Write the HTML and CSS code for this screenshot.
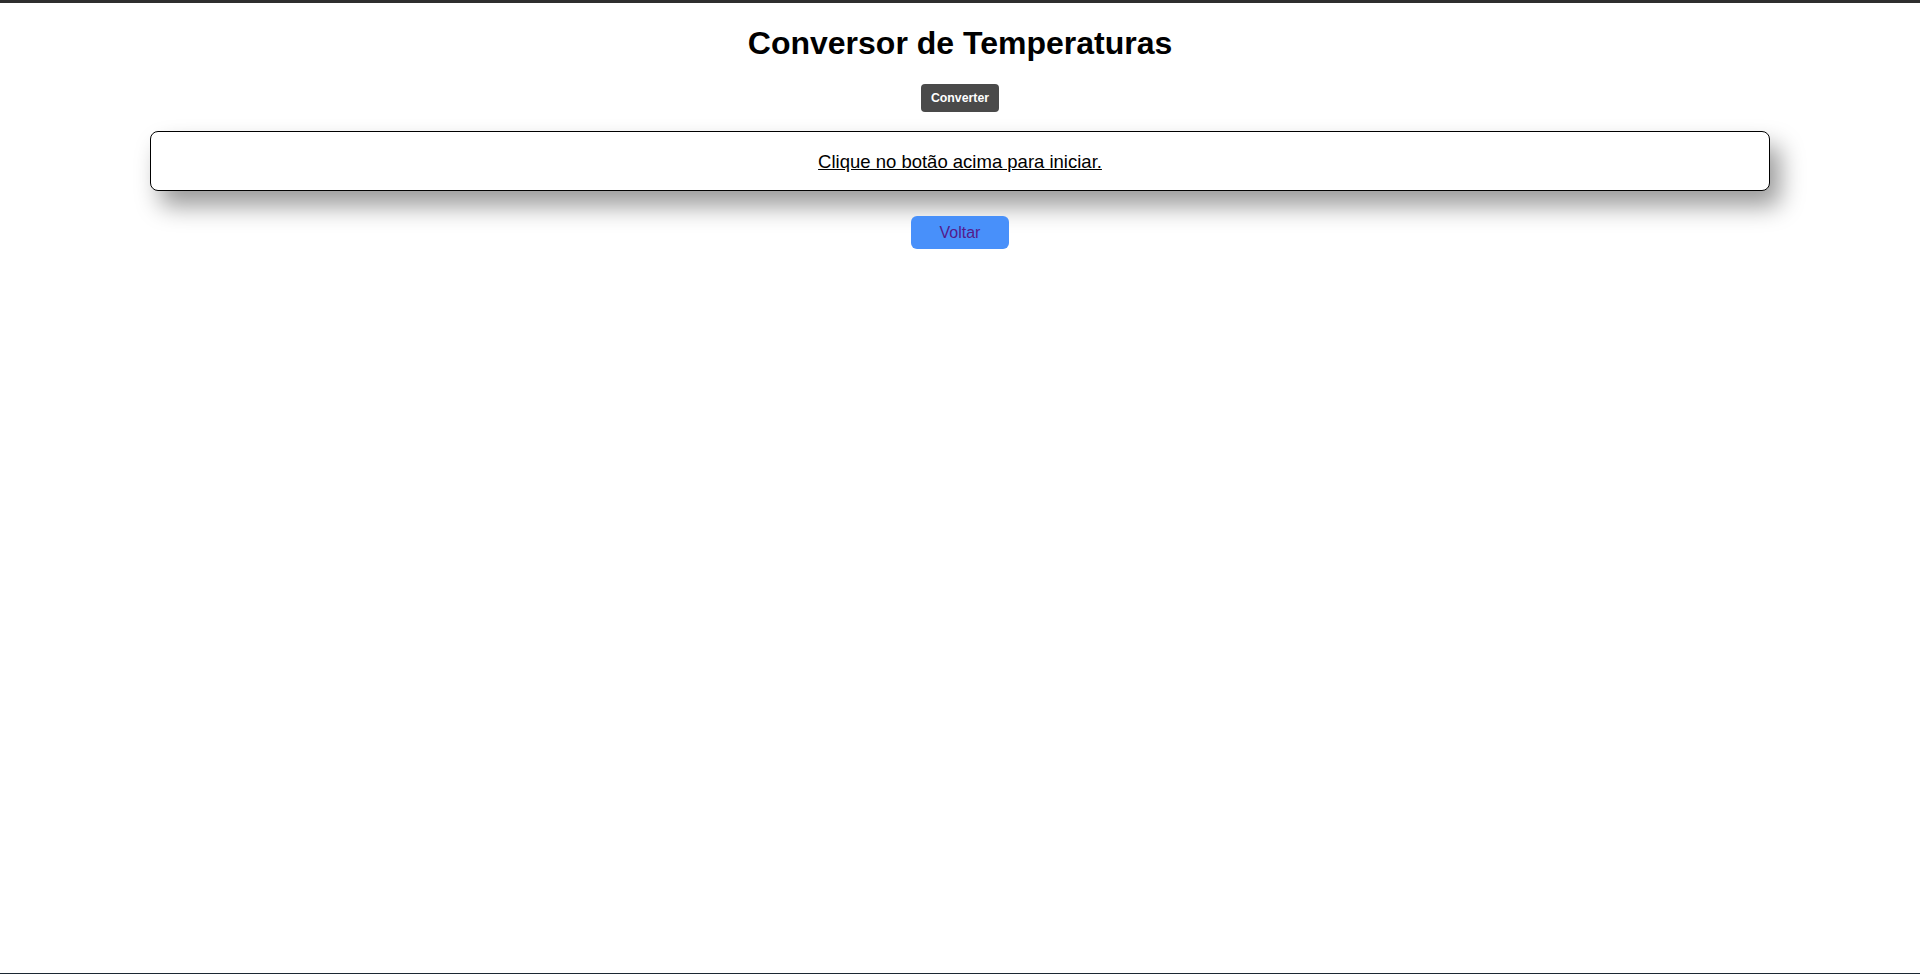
FILE: index.html
```html
<!DOCTYPE html>
<html lang="pt-BR">
<head>
<meta charset="utf-8">
<title>Conversor de Temperaturas</title>
<link rel="stylesheet" href="styles.css">
</head>
<body>
<div class="topbar"></div>
<main class="page">
  <h1 class="title">Conversor de Temperaturas</h1>
  <div class="actions">
    <button class="btn-convert" type="button">Converter</button>
  </div>
  <div class="result">
    <span class="result-text">Clique no botão acima para iniciar.</span>
  </div>
  <div class="back-row">
    <a class="btn-back" href="#">Voltar</a>
  </div>
</main>
<div class="bottomline"></div>
</body>
</html>
```

FILE: styles.css
```css
html, body {
  margin: 0;
  padding: 0;
  background: #ffffff;
}

body {
  height: 100vh;
  overflow: hidden;
  display: flex;
  flex-direction: column;
  font-family: "Liberation Sans", Arial, sans-serif;
  color: #000;
}

.topbar {
  height: 3px;
  background: #2f2f2f;
  flex: none;
}

.page {
  flex: 1;
  display: flex;
  flex-direction: column;
  align-items: center;
}

.title {
  margin: 22px 0 0;
  font-size: 32px;
  line-height: 37px;
  font-weight: bold;
  text-align: center;
}

.actions {
  margin-top: 22px;
  display: flex;
  justify-content: center;
}

.btn-convert {
  height: 28px;
  padding: 0 10px;
  background: #4a4a4a;
  color: #ffffff;
  border: none;
  border-radius: 4px;
  font-family: "Liberation Sans", Arial, sans-serif;
  font-size: 12.3px;
  font-weight: bold;
  cursor: pointer;
}

.result {
  box-sizing: border-box;
  width: 1620px;
  margin-top: 19px;
  height: 60px;
  padding-top: 2px;
  border: 1px solid #000;
  border-radius: 8px;
  background: #fff;
  box-shadow: 10px 15px 25px rgba(0, 0, 0, 0.4);
  display: flex;
  align-items: center;
  justify-content: center;
}

.result-text {
  font-size: 18.5px;
  line-height: 22px;
  text-decoration: underline;
}

.back-row {
  margin-top: 25px;
  display: flex;
  justify-content: center;
}

.btn-back {
  display: inline-block;
  box-sizing: border-box;
  width: 98px;
  height: 33px;
  line-height: 33px;
  text-align: center;
  background: #4890fa;
  color: #551a8b;
  text-decoration: none;
  border-radius: 6px;
  font-size: 16px;
}

.bottomline {
  height: 1px;
  background: #1c2833;
  flex: none;
}
```
